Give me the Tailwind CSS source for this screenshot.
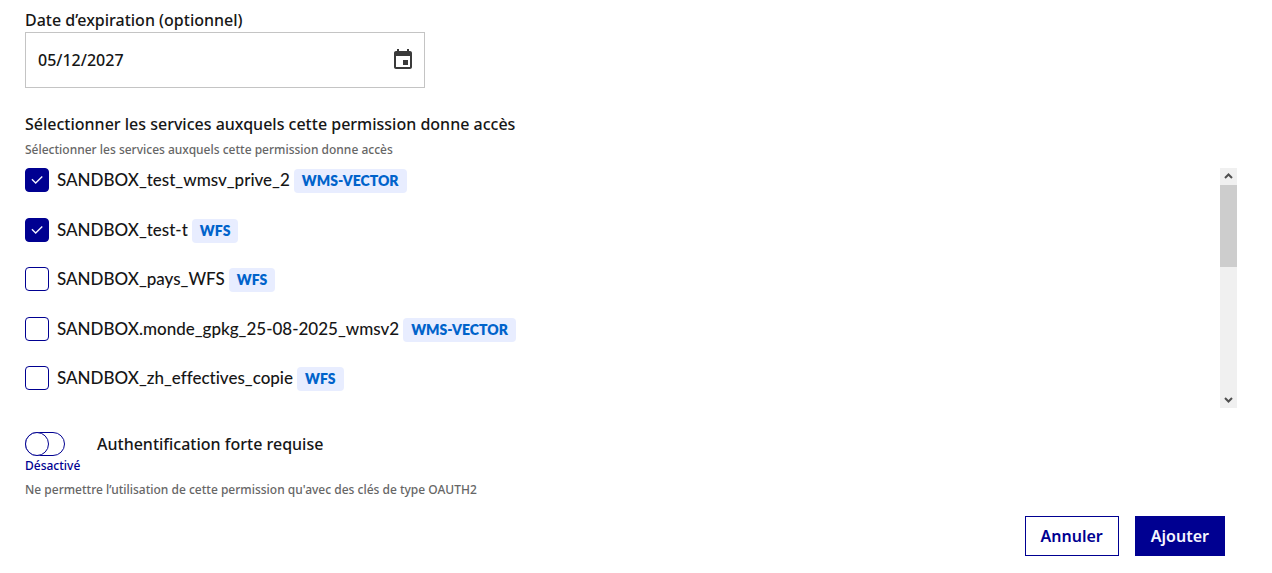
<!DOCTYPE html>
<html lang="fr">
  <head>
    <meta charset="UTF-8" />
    <meta name="viewport" content="width=device-width, initial-scale=1.0" />
    <title>Ajouter une permission</title>
    <script src="https://cdn.jsdelivr.net/npm/@tailwindcss/browser@4"></script>
  </head>
  <body class="bg-white font-['Noto_Sans',sans-serif] text-base font-medium text-[#161616]">
    <form class="pt-2 pr-[35px] pb-4 pl-[25px]">
      <!-- Expiration date -->
      <label for="expiration" class="block leading-6">Date d’expiration (optionnel)</label>
      <div class="flex h-14 w-full max-w-[400px] items-center border border-[#c4c4c4] pr-[9px] pl-3">
        <input type="text" id="expiration" value="05/12/2027" class="min-w-0 flex-1 outline-none" />
        <button type="button" aria-label="Choisir une date" class="text-[#3a3a3a]">
          <svg class="size-6" viewBox="0 0 24 24" fill="currentColor" aria-hidden="true">
            <path d="M17 12h-5v5h5v-5zM16 1v2H8V1H6v2H5c-1.110 0-1.990.9-1.990 2L3 19c0 1.100.89 2 2 2h14c1.100 0 2-.9 2-2V5c0-1.100-.9-2-2-2h-1V1h-2zm3 18H5V8h14v11z" />
          </svg>
        </button>
      </div>

      <!-- Services -->
      <fieldset class="mt-6">
        <legend class="leading-6">Sélectionner les services auxquels cette permission donne accès</legend>
        <p class="mt-1 text-xs leading-5 text-[#666]">Sélectionner les services auxquels cette permission donne accès</p>
        <div class="mt-2 flex h-60 font-['Lato',sans-serif] text-[17px] [font-variant-ligatures:none]">
          <div class="flex flex-1 flex-col justify-between pb-[18px]">
            <div class="flex items-center gap-2">
              <div class="relative flex size-6">
                <input type="checkbox" id="service-1" checked class="peer size-6 appearance-none rounded border border-[#000091] checked:bg-[#000091]" />
                <svg class="pointer-events-none absolute inset-1 hidden size-4 peer-checked:block" viewBox="0 0 24 24" fill="#f5f5fe" aria-hidden="true"><path d="m10 15.170 9.190-9.190 1.420 1.410L10 18l-6.360-6.360 1.410-1.420z" /></svg>
              </div>
              <label for="service-1" class="flex h-6 gap-1 leading-6">SANDBOX_test_wmsv_prive_2 <span class="mt-px h-6 rounded bg-[#e8edff] px-2 text-sm leading-6 font-extrabold text-[#0063cb]">WMS-VECTOR</span></label>
            </div>
            <div class="flex items-center gap-2">
              <div class="relative flex size-6">
                <input type="checkbox" id="service-2" checked class="peer size-6 appearance-none rounded border border-[#000091] checked:bg-[#000091]" />
                <svg class="pointer-events-none absolute inset-1 hidden size-4 peer-checked:block" viewBox="0 0 24 24" fill="#f5f5fe" aria-hidden="true"><path d="m10 15.170 9.190-9.190 1.420 1.410L10 18l-6.360-6.360 1.410-1.420z" /></svg>
              </div>
              <label for="service-2" class="flex h-6 gap-1 leading-6">SANDBOX_test-t <span class="mt-px h-6 rounded bg-[#e8edff] px-2 text-sm leading-6 font-extrabold text-[#0063cb]">WFS</span></label>
            </div>
            <div class="flex items-center gap-2">
              <input type="checkbox" id="service-3" class="size-6 appearance-none rounded border border-[#000091] checked:bg-[#000091]" />
              <label for="service-3" class="flex h-6 gap-1 leading-6">SANDBOX_pays_WFS <span class="mt-px h-6 rounded bg-[#e8edff] px-2 text-sm leading-6 font-extrabold text-[#0063cb]">WFS</span></label>
            </div>
            <div class="flex items-center gap-2">
              <input type="checkbox" id="service-4" class="size-6 appearance-none rounded border border-[#000091] checked:bg-[#000091]" />
              <label for="service-4" class="flex h-6 gap-1 leading-6">SANDBOX.monde_gpkg_25-08-2025_wmsv2 <span class="mt-px h-6 rounded bg-[#e8edff] px-2 text-sm leading-6 font-extrabold text-[#0063cb]">WMS-VECTOR</span></label>
            </div>
            <div class="flex items-center gap-2">
              <input type="checkbox" id="service-5" class="size-6 appearance-none rounded border border-[#000091] checked:bg-[#000091]" />
              <label for="service-5" class="flex h-6 gap-1 leading-6">SANDBOX_zh_effectives_copie <span class="mt-px h-6 rounded bg-[#e8edff] px-2 text-sm leading-6 font-extrabold text-[#0063cb]">WFS</span></label>
            </div>
          </div>
          <!-- Scrollbar -->
          <div class="flex w-[17px] flex-col bg-[#f0f0f0]" aria-hidden="true">
            <svg class="h-[17px] w-full" viewBox="0 0 17 17" fill="none" stroke="#505050" stroke-width="2"><path d="M5 10 8.500 6.500l3.500 3.500" /></svg>
            <div class="h-[82px] bg-[#cdcdcd]"></div>
            <svg class="mt-auto h-[17px] w-full" viewBox="0 0 17 17" fill="none" stroke="#505050" stroke-width="2"><path d="M5 7 8.500 10.500 12 7" /></svg>
          </div>
        </div>
      </fieldset>

      <!-- Strong authentication -->
      <div class="mt-6 flex items-start gap-8">
        <input type="checkbox" role="switch" id="strong-auth" aria-describedby="strong-auth-hint" class="h-6 w-10 appearance-none rounded-full border border-[#000091] before:-m-px before:block before:size-6 before:rounded-full before:border before:border-[#000091] before:bg-white checked:bg-[#000091] checked:before:translate-x-4" />
        <label for="strong-auth" class="leading-6">Authentification forte requise</label>
      </div>
      <p class="text-xs leading-5 text-[#000091]">Désactivé</p>
      <p id="strong-auth-hint" class="mt-1 text-xs leading-5 text-[#666]">Ne permettre l’utilisation de cette permission qu'avec des clés de type OAUTH2</p>

      <div class="mt-4 flex justify-end gap-4 pr-3">
        <button type="button" class="h-10 border border-[#000091] px-[15px] font-semibold text-[#000091]">Annuler</button>
        <button type="submit" class="h-10 bg-[#000091] px-4 font-semibold text-[#f5f5fe]">Ajouter</button>
      </div>
    </form>
  </body>
</html>
